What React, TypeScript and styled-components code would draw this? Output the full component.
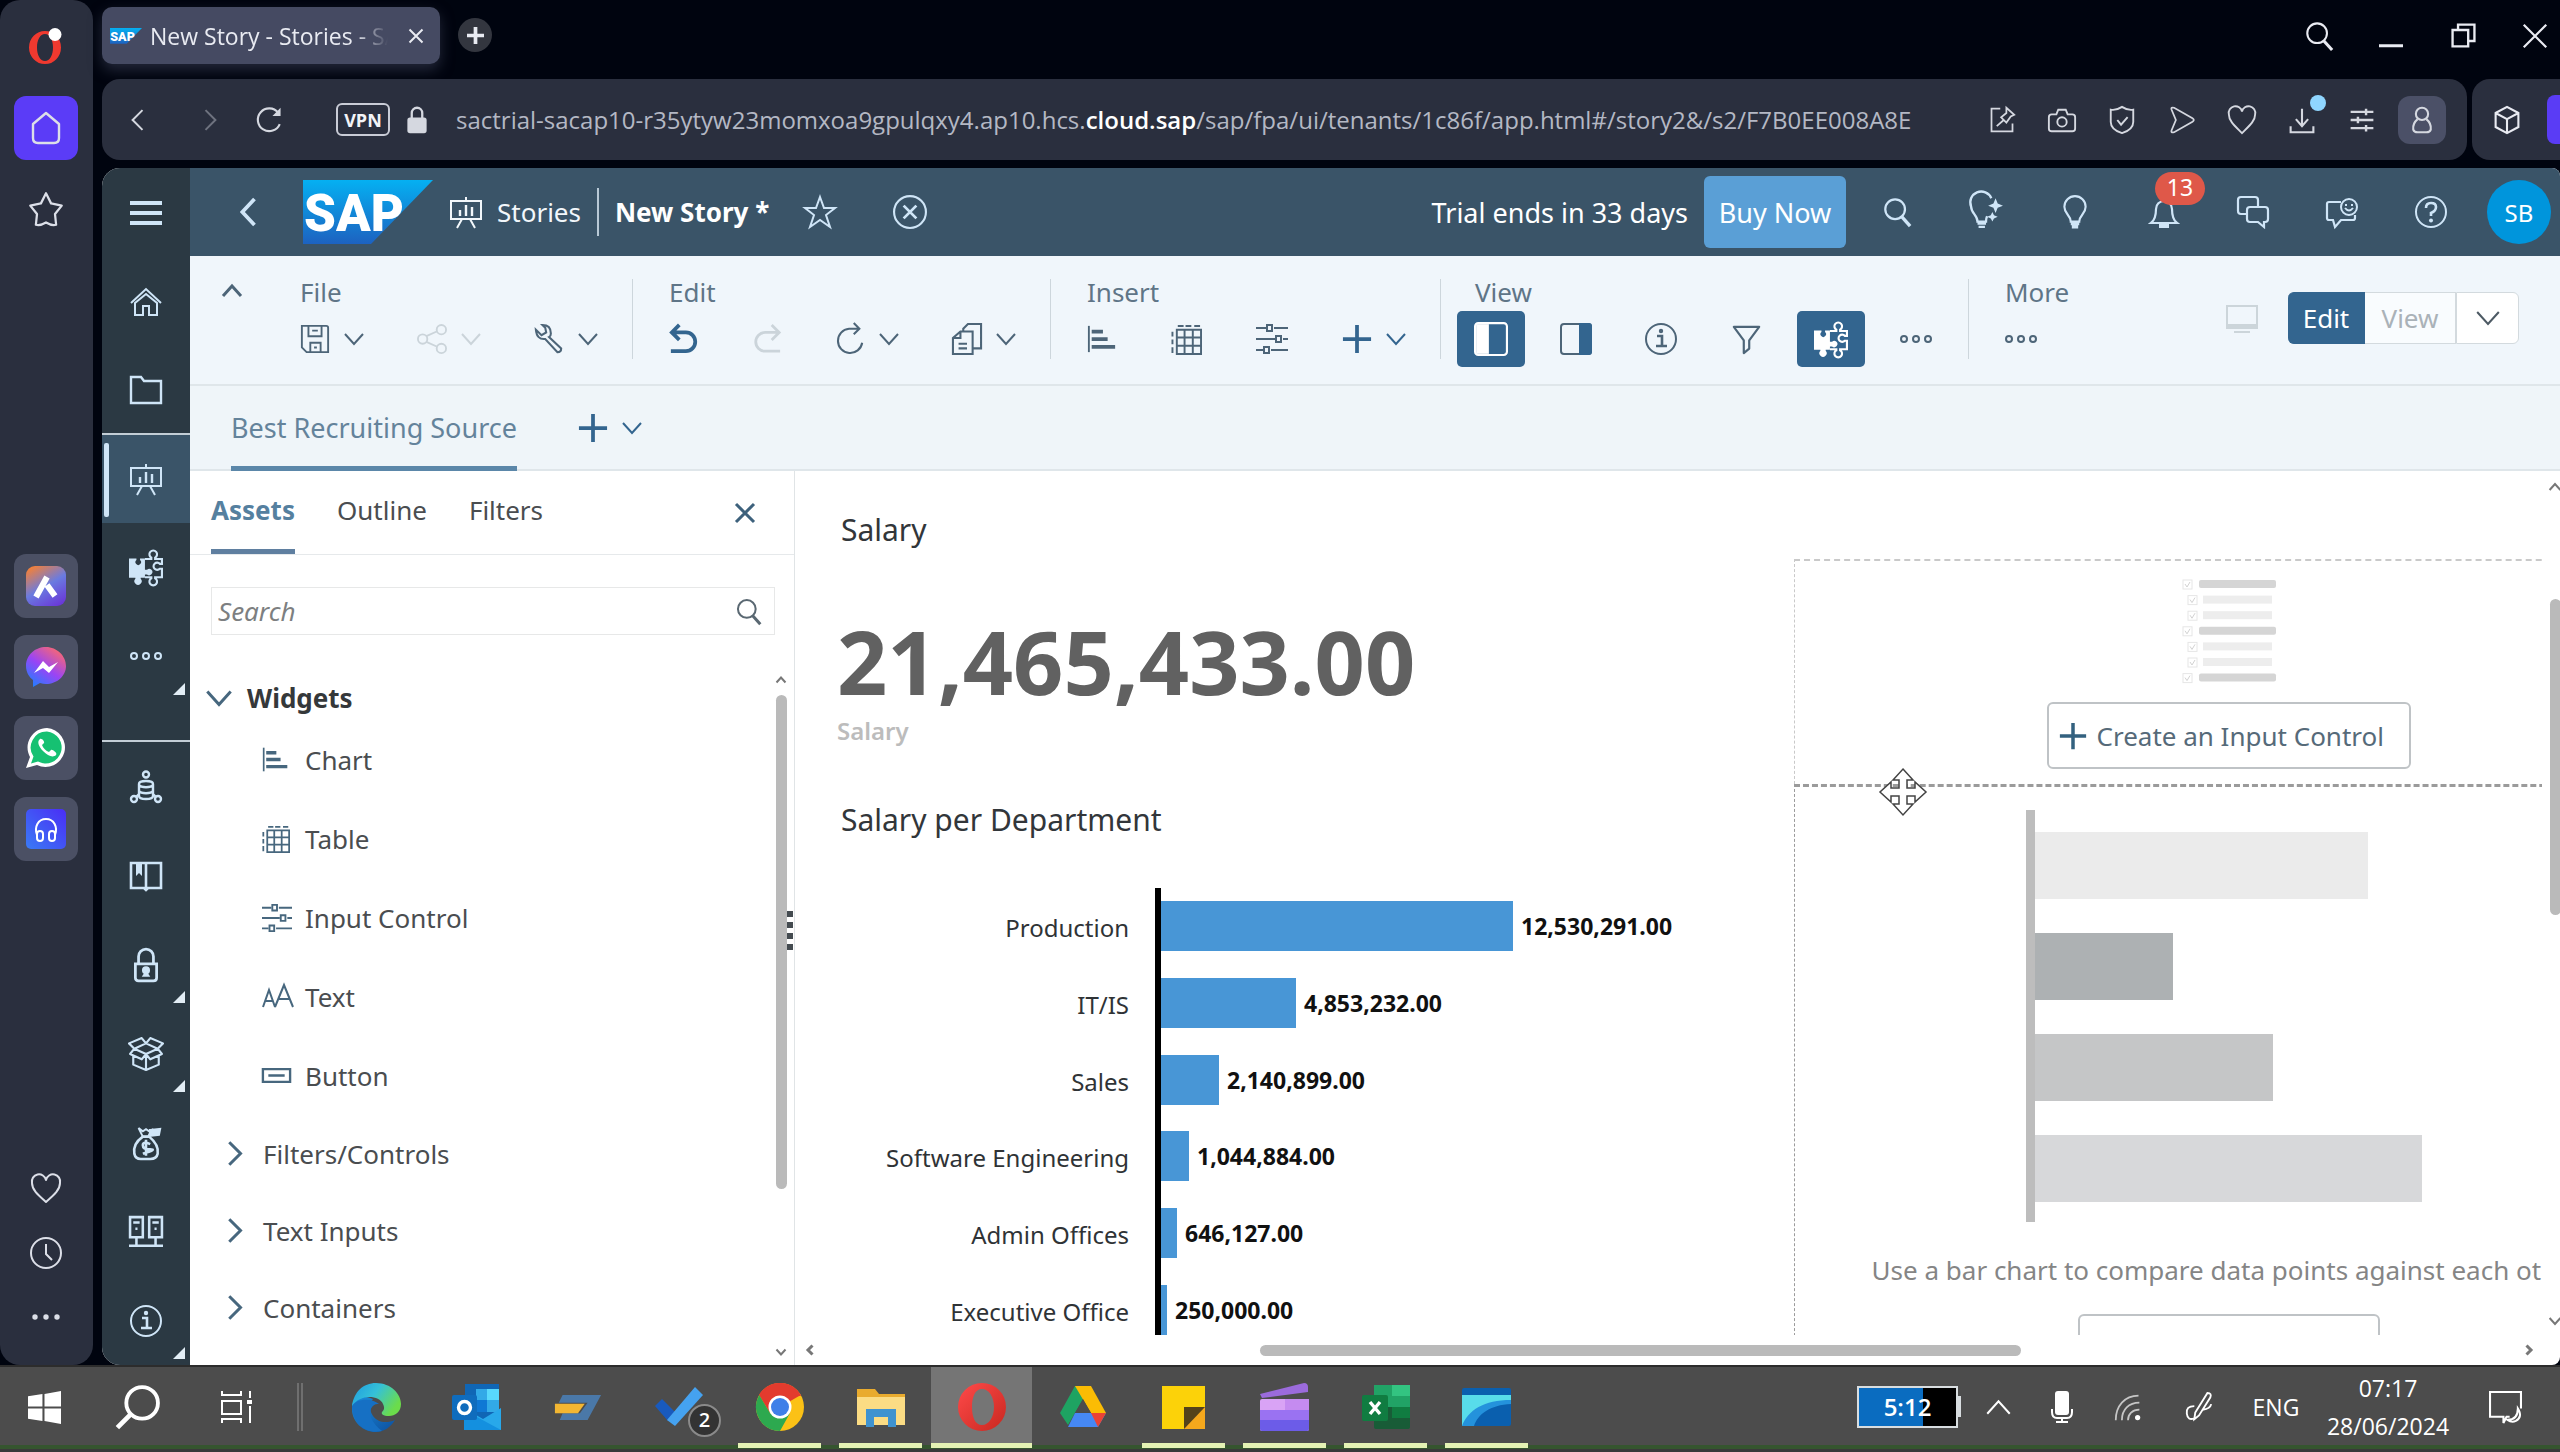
import React from 'react';
import styled, { createGlobalStyle, css } from 'styled-components';

const uiFont = '"Noto Sans", "Open Sans", sans-serif';
const chromeFont = '"Open Sans", "Noto Sans", sans-serif';

const color = {
  ink: '#00040f',
  chrome: '#2a2f3e',
  tile: '#4b5064',
  nav: '#2b3943',
  shell: '#3a5468',
  shellIcon: '#cfe5f7',
  tool: '#f0f6fb',
  toolIcon: '#4d6578',
  accent: '#33658f',
  line: '#dfe6ea',
  taskbar: '#4c4c4c',
};

const Global = createGlobalStyle`
  * { box-sizing: border-box; }
  body { margin: 0; background: ${color.ink}; font-family: ${uiFont}; }
  button { font: inherit; color: inherit; background: none; border: 0; padding: 0; margin: 0; }
  a { color: inherit; text-decoration: none; }
  svg { display: block; flex: none; overflow: visible; }
  h2, p { margin: 0; font-weight: 400; }
`;

/* ---------- icons ---------- */

type IconProps = { size?: number; w?: number; stroke?: number; children: React.ReactNode };
const Icon = ({ size = 32, w, stroke = 2, children }: IconProps) => (
  <svg width={w ?? size} height={size} viewBox={`0 0 ${w ?? 32} 32`} fill="none" stroke="currentColor" strokeWidth={stroke} aria-hidden="true">
    {children}
  </svg>
);

const Chevron = ({ dir = 'down', size = 20, stroke = 2 }: { dir?: 'down' | 'up' | 'left' | 'right'; size?: number; stroke?: number }) => {
  const d = { down: 'M1 5l9 10 9-10', up: 'M1 15l9-10 9 10', left: 'M15 1L6 10l9 9', right: 'M5 1l9 9-9 9' }[dir];
  return (
    <svg width={size} height={size} viewBox="0 0 20 20" fill="none" stroke="currentColor" strokeWidth={(stroke * 20) / size} aria-hidden="true">
      <path d={d} />
    </svg>
  );
};

const SearchGlyph = ({ size = 32, stroke = 2 }: { size?: number; stroke?: number }) => (
  <Icon size={size} stroke={stroke}><circle cx="14" cy="13" r="10.5" /><path d="M21 21l9 10" strokeWidth={stroke * 1.5} /></Icon>
);
const Dots = () => <Icon><circle cx="4" cy="16" r="3" /><circle cx="16" cy="16" r="3" /><circle cx="28" cy="16" r="3" /></Icon>;
const StoryGlyph = () => (
  <Icon><path d="M1 5h30v18H1zM16 1v4M12 23l-5 9M20 23l5 9" /><path d="M10 20v-6M16 20V9M22 20v-9" strokeWidth="2.4" /></Icon>
);
const Puzzle = () => (
  <Icon size={34}>
    <path d="M0 8h7v1.500a2.600 2.600 0 1 0 3.400 0V8H15v10.500h2a3 3 0 1 1 0 4.500h-2v3h-4v1a3.400 3.400 0 1 1-5 0v-1H0z" fill="currentColor" stroke="none" />
    <path d="M15 8.500h6V7.200a3.600 3.600 0 1 1 3.600 0v1.300H31V13h-2a3.400 3.400 0 1 0 0 4.600h2v8h-6.400v1a3.600 3.600 0 1 1-3.600 0v-1h-6" />
  </Icon>
);
const InfoGlyph = () => (
  <Icon><circle cx="16" cy="16" r="15" /><path d="M12 13h5v10M11 23h11" strokeWidth="2.600" /><circle cx="16" cy="8" r="2.200" fill="currentColor" stroke="none" /></Icon>
);
const ChartGlyph = ({ size = 30 }: { size?: number }) => (
  <Icon size={size}><path d="M2 2v28" /><path d="M5 8h12M5 16h17M5 24.500h25" strokeWidth="4" /></Icon>
);
const TableGlyph = ({ size = 32 }: { size?: number }) => (
  <Icon size={size}><path d="M6 6h25v25H6zM14 6v25M22.500 6v25M6 14h25M6 22.500h25" /><path d="M7 2h6M15 2h6M24 2h6M1.500 8v5M1.500 16v5M1.500 24v6" /></Icon>
);
const SlidersGlyph = ({ size = 32 }: { size?: number }) => (
  <Icon size={size}>
    <path d="M0 5h10M18 5h14M0 16h19M27 16h5M0 27h7M15 27h17" />
    <path d="M11 2h5v6h-5zM20 13h5v6h-5zM8 24h5v6H8z" />
  </Icon>
);
const Plus = ({ size = 30 }: { size?: number }) => <Icon size={size} stroke={4}><path d="M16 1v30M1 16h30" /></Icon>;
const Bulb = () => <Icon size={34}><path d="M12 25c0-6-6-7-6-14a10 10 0 0 1 20 0c0 7-6 8-6 14z" /><path d="M12 27h8M13 30h6" strokeWidth="3" /></Icon>;
const Heart = () => <Icon><path d="M16 29C8 22 2 17 2 10a7 7 0 0 1 14-3 7 7 0 0 1 14 3c0 7-6 12-14 19z" strokeLinejoin="round" /></Icon>;

/* ---------- frame ---------- */

const Screen = styled.div`
  height: 100vh;
  min-height: 1200px;
  display: flex;
  flex-direction: column;
  overflow: hidden;
`;
const Desktop = styled.div`
  flex: 1;
  min-height: 0;
  display: flex;
  gap: 9px;
`;
const Rail = styled.aside`
  width: 93px;
  flex: none;
  background: ${color.chrome};
  border-radius: 20px;
  display: flex;
  flex-direction: column;
  align-items: center;
  padding: 24px 2px 16px 0;
  color: #dcdfe8;
`;
const RailGroup = styled.div<{ $gap: number; $top?: string }>`
  display: flex;
  flex-direction: column;
  gap: ${p => p.$gap}px;
  margin-top: ${p => p.$top ?? '0'};
`;
const RailButton = styled.button<{ $bg?: string }>`
  width: 64px;
  height: 64px;
  border-radius: 12px;
  display: grid;
  place-items: center;
  background: ${p => p.$bg ?? 'transparent'};
`;
const RailLogo = styled.a`
  height: 44px;
  width: 64px;
  margin-bottom: 28px;
  display: grid;
  place-items: center;
`;
const BrowserColumn = styled.div`
  flex: 1;
  min-width: 0;
  display: flex;
  flex-direction: column;
  font-family: ${chromeFont};
`;
const TitleBar = styled.div`
  height: 79px;
  flex: none;
  display: flex;
  align-items: flex-start;
  padding: 7px 1px 0 0;
  color: #e9ebf2;
`;
const Tab = styled.div`
  width: 338px;
  height: 57px;
  border-radius: 10px;
  background: #454a62;
  box-shadow: 0 6px 14px #23283a;
  display: flex;
  align-items: center;
  gap: 8px;
  padding: 0 16px 0 8px;
  font-size: 23px;
`;
const TabTitle = styled.span`
  flex: 1;
  min-width: 0;
  margin-right: 12px;
  overflow: hidden;
  white-space: nowrap;
  mask-image: linear-gradient(90deg, #000 86%, transparent);
`;
const NewTab = styled.button`
  width: 34px;
  height: 34px;
  border-radius: 50%;
  background: #33363f;
  margin: 11px 0 0 18px;
  display: grid;
  place-items: center;
`;
const WindowButtons = styled.div`
  margin-left: auto;
  display: flex;
  gap: 24px;
`;
const WindowButton = styled.button`
  width: 48px;
  height: 57px;
  display: grid;
  place-items: center;
`;
const AddressRow = styled.div`
  height: 81px;
  flex: none;
  display: flex;
  gap: 5px;
  margin-bottom: 8px;
`;
const AddressBar = styled.div`
  flex: 1;
  min-width: 0;
  background: ${color.chrome};
  border-radius: 18px;
  display: flex;
  align-items: center;
  padding-right: 15px;
  color: #d5d8e0;
`;
const ChromeButton = styled.button<{ $w?: number; $dim?: boolean }>`
  width: ${p => p.$w ?? 60}px;
  height: 60px;
  flex: none;
  display: grid;
  place-items: center;
  position: relative;
  opacity: ${p => (p.$dim ? 0.4 : 1)};
`;
const Vpn = styled.button`
  margin-left: 46px;
  width: 54px;
  height: 33px;
  border: 2px solid #c9ccd6;
  border-radius: 6px;
  font-size: 18px;
  line-height: 28px;
  font-weight: 700;
  color: #f2f3f7;
`;
const Url = styled.div`
  flex: 1;
  min-width: 0;
  margin: 0 29px 0 12px;
  overflow: hidden;
  white-space: nowrap;
  font-size: 24px;
  line-height: 40px;
  color: #b4b8c4;
  b { color: #fff; font-weight: 600; }
`;
const DownloadDot = styled.i`
  position: absolute;
  width: 16px;
  height: 16px;
  border-radius: 50%;
  background: #8fd6ff;
  right: 6px;
  top: 5px;
`;
const Profile = styled.span`
  width: 48px;
  height: 48px;
  border-radius: 12px;
  background: #4b5067;
  display: grid;
  place-items: center;
`;
const SideDock = styled.div`
  width: 88px;
  flex: none;
  background: ${color.chrome};
  border-radius: 18px 0 0 18px;
  display: flex;
  align-items: center;
  justify-content: space-between;
  padding-left: 5px;
  color: #e9ebf2;
`;
const DockAccent = styled.i`
  width: 13px;
  height: 49px;
  border-radius: 8px 0 0 8px;
  background: #5a3cf5;
`;

/* ---------- application shell ---------- */

const AppWindow = styled.div`
  flex: 1;
  min-height: 0;
  display: flex;
  border-radius: 18px 8px 8px 18px;
  overflow: hidden;
  background: #fff;
  font-family: ${uiFont};
`;
const Nav = styled.nav`
  width: 88px;
  flex: none;
  background: ${color.nav};
  color: ${color.shellIcon};
  display: flex;
  flex-direction: column;
`;
const NavItem = styled.button<{ $h?: number; $active?: boolean; $more?: boolean }>`
  position: relative;
  height: ${p => p.$h ?? 88}px;
  flex: none;
  display: grid;
  place-items: center;
  ${p => p.$active && css`
    background: ${color.shell};
    border-top: 2px solid #c3ced6;
    &::before {
      content: '';
      position: absolute;
      left: 2px;
      top: 8px;
      bottom: 6px;
      width: 5px;
      border-radius: 2px;
      background: ${color.shellIcon};
    }
  `}
  ${p => p.$more && css`
    &::after {
      content: '';
      position: absolute;
      right: 5px;
      bottom: 6px;
      border-left: 12px solid transparent;
      border-bottom: 12px solid #e2edf5;
    }
  `}
`;
const NavLower = styled.div`
  margin-top: 39px;
  border-top: 2px solid #c3ced6;
  flex: 1;
  display: flex;
  flex-direction: column;
  ${NavItem} { flex: 1; height: auto; }
`;
const Work = styled.div`
  flex: 1;
  min-width: 0;
  display: flex;
  flex-direction: column;
`;
const Shell = styled.header`
  height: 88px;
  flex: none;
  background: ${color.shell};
  color: #fff;
  display: flex;
  align-items: center;
  font-size: 27px;
`;
const ShellButton = styled.button<{ $w?: number }>`
  position: relative;
  width: ${p => p.$w ?? 89}px;
  height: 88px;
  flex: none;
  display: grid;
  place-items: center;
  color: ${color.shellIcon};
`;
const Crumb = styled.a`
  display: flex;
  align-items: center;
  gap: 15px;
  margin-left: 17px;
  font-size: 26px;
  color: #f2f7fb;
`;
const CrumbRule = styled.i`
  width: 2px;
  height: 48px;
  background: #b8c9d6;
  margin: 0 16px;
`;
const StoryName = styled.span`
  font-size: 26px;
  font-weight: 700;
`;
const Trial = styled.span`
  margin-left: auto;
  margin-right: 16px;
`;
const Buy = styled.button`
  width: 142px;
  height: 72px;
  border-radius: 6px;
  background: #5a9fd6;
  margin-right: 6px;
`;
const Badge = styled.span`
  position: absolute;
  top: 4px;
  left: 36px;
  width: 50px;
  height: 33px;
  border-radius: 17px;
  background: #df5849;
  color: #fff;
  font-size: 23px;
  line-height: 30px;
  text-align: center;
`;
const Avatar = styled.button`
  width: 64px;
  height: 64px;
  border-radius: 50%;
  background: #0095dc;
  margin: 0 9px 0 12px;
  font-size: 24px;
`;

const Toolbar = styled.div`
  height: 130px;
  flex: none;
  background: ${color.tool};
  border-bottom: 2px solid ${color.line};
  padding: 19px 41px 0 0;
  display: flex;
  align-items: flex-start;
  color: ${color.toolIcon};
`;
const Collapse = styled.button`
  width: 84px;
  height: 32px;
  margin-right: 26px;
  display: grid;
  place-items: center;
`;
const Group = styled.section<{ $tight?: boolean }>`
  h2 {
    font-size: 26px;
    line-height: 34px;
    color: #5f7587;
    padding-left: ${p => (p.$tight ? 18 : 0)}px;
  }
`;
const Tools = styled.div<{ $gap?: number }>`
  height: 56px;
  margin-top: 2px;
  display: flex;
  align-items: center;
  gap: ${p => p.$gap ?? 53}px;
`;
const Tool = styled.button<{ $dim?: boolean; $strong?: boolean }>`
  min-width: 30px;
  height: 56px;
  display: flex;
  align-items: center;
  gap: 14px;
  color: ${p => (p.$dim ? '#cbd4da' : p.$strong ? color.accent : 'inherit')};
`;
const Toggle = styled.button<{ $on?: boolean }>`
  width: 68px;
  height: 56px;
  border-radius: 5px;
  display: grid;
  place-items: center;
  background: ${p => (p.$on ? color.accent : 'transparent')};
  color: ${p => (p.$on ? '#fff' : 'inherit')};
`;
const Separator = styled.i<{ $l?: number; $r?: number }>`
  width: 1px;
  height: 80px;
  margin: 4px ${p => p.$r ?? 36}px 0 ${p => p.$l ?? 34}px;
  background: #cdd6dc;
`;
const Modes = styled.div`
  margin: 17px 0 0 auto;
  display: flex;
  align-items: center;
  font-size: 26px;
`;
const Mode = styled.button<{ $w: number; $on?: boolean }>`
  width: ${p => p.$w}px;
  height: 52px;
  display: grid;
  place-items: center;
  background: ${p => (p.$on ? color.accent : '#f9fcfe')};
  color: ${p => (p.$on ? '#fff' : '#aab2b8')};
  border: 1px solid ${p => (p.$on ? color.accent : '#d3dade')};
  border-left-width: 0;
  &:first-of-type { border-radius: 6px 0 0 6px; }
  &:last-of-type { border-left-width: 1px; border-radius: 0 6px 6px 0; background: #fff; color: #4d5a64; }
`;
const Device = styled.span`
  color: #ccd5da;
  margin-right: 30px;
`;
const PageTabs = styled.div`
  height: 85px;
  flex: none;
  background: #eff5f9;
  border-bottom: 2px solid ${color.line};
  padding-left: 41px;
  display: flex;
  align-items: flex-start;
  color: ${color.toolIcon};
`;
const PageTab = styled.button`
  font-size: 27px;
  color: #64839b;
  border-bottom: 5px solid #5b87a9;
  height: 85px;
  padding-top: 3px;
  margin-right: 61px;
`;
const AddPage = styled(Tool)`
  height: 84px;
`;

/* ---------- assets panel ---------- */

const Body = styled.div`
  flex: 1;
  min-height: 0;
  display: flex;
`;
const Panel = styled.aside`
  position: relative;
  width: 605px;
  flex: none;
  border-right: 1px solid #e0e4e6;
  display: flex;
  flex-direction: column;
  color: #4a4d50;
  font-size: 26px;
`;
const PanelTabs = styled.div`
  height: 84px;
  flex: none;
  border-bottom: 1px solid #e6e9eb;
  padding: 0 33px 0 21px;
  display: flex;
  gap: 42px;
`;
const PanelTab = styled.button<{ $on?: boolean }>`
  height: 83px;
  font-weight: ${p => (p.$on ? 700 : 400)};
  color: ${p => (p.$on ? '#55809f' : 'inherit')};
  border-bottom: 5px solid ${p => (p.$on ? '#5f7fa0' : 'transparent')};
`;
const ClosePanel = styled.button`
  margin-left: auto;
  color: #3d617c;
`;
const SearchBox = styled.label`
  margin: 32px 19px 40px 21px;
  height: 48px;
  flex: none;
  border: 1px solid #e7e8e8;
  padding: 0 12px 0 6px;
  display: flex;
  align-items: center;
  color: #5a6872;
  input {
    flex: 1;
    min-width: 0;
    border: 0;
    outline: 0;
    padding: 0;
    background: none;
    font: italic 26px ${uiFont};
  }
  input::placeholder { color: #7d7f81; opacity: 1; }
`;
const TreeArea = styled.div`
  flex: 1;
  min-height: 0;
  display: flex;
  justify-content: space-between;
`;
const Tree = styled.ul`
  list-style: none;
  margin: 0;
  padding: 0;
  flex: 1;
  overflow: hidden;
`;
const TreeRow = styled.li<{ $h: number; $indent: number; $gap: number; $bold?: boolean }>`
  height: ${p => p.$h}px;
  padding-left: ${p => p.$indent}px;
  display: flex;
  align-items: center;
  gap: ${p => p.$gap}px;
  font-weight: ${p => (p.$bold ? 700 : 400)};
  color: ${p => (p.$bold ? '#35383a' : 'inherit')};
  svg { color: #47677e; }
`;
const WidgetIcon = styled.span`
  width: 43px;
  flex: none;
`;
const ScrollColumn = styled.div<{ $w: number; $pad: string }>`
  width: ${p => p.$w}px;
  flex: none;
  display: flex;
  flex-direction: column;
  align-items: center;
  padding: ${p => p.$pad};
  color: #777;
`;
const VThumb = styled.i<{ $h: number; $top: number }>`
  width: 11px;
  height: ${p => p.$h}px;
  margin: ${p => p.$top}px 0 auto;
  border-radius: 6px;
  background: #bababa;
`;
const Grip = styled.i`
  position: absolute;
  right: 1px;
  top: 440px;
  width: 6px;
  height: 40px;
  background: repeating-linear-gradient(#444b50 0 6px, transparent 6px 11px);
`;

/* ---------- story canvas ---------- */

const CanvasArea = styled.main`
  flex: 1;
  min-width: 0;
  display: flex;
  flex-direction: column;
`;
const CanvasRow = styled.div`
  flex: 1;
  min-height: 0;
  display: flex;
`;
const Canvas = styled.div`
  position: relative;
  flex: 1;
  min-width: 0;
  overflow: hidden;
  display: grid;
  grid-template-columns: 999px 868px;
`;
const Stats = styled.div`
  padding: 38px 0 0 46px;
  color: #32363a;
`;
const WidgetTitle = styled.h2`
  font-size: 30px;
  line-height: 42px;
`;
const BigNumber = styled.p`
  margin-top: 57px;
  margin-left: -4px;
  font-size: 88px;
  line-height: 106px;
  font-weight: 700;
  color: #616161;
`;
const NumberCaption = styled.p`
  margin: 0 0 51px -4px;
  font-size: 24px;
  line-height: 34px;
  font-weight: 600;
  color: #bcbcbc;
`;
const Bars = styled.div`
  height: 460px;
  margin-top: 47px;
  display: flex;
  flex-direction: column;
`;
const BarRow = styled.div`
  flex: 1;
  display: grid;
  grid-template-columns: 288px 1fr;
  column-gap: 26px;
`;
const BarLabel = styled.span`
  align-self: center;
  text-align: right;
  font-size: 24px;
  line-height: 32px;
  padding-top: 4px;
  color: #2f3336;
`;
const BarTrack = styled.div`
  border-left: 6px solid #000;
  display: flex;
  align-items: center;
  gap: 8px;
  font-size: 23px;
  font-weight: 700;
  color: #111;
`;
const Bar = styled.i`
  height: 50px;
  background: #4896d6;
`;
const Placeholders = styled.div`
  padding-top: 88px;
  display: flex;
  flex-direction: column;
`;
const InputPlaceholder = styled.section`
  height: 225px;
  border: dashed #c9c9c9;
  border-width: 2px 0 0 1px;
  padding-top: 18px;
  display: flex;
  flex-direction: column;
  align-items: center;
  gap: 19px;
`;
const ChartPlaceholder = styled.section`
  flex: 1;
  border: dashed #9b9b9b;
  border-width: 3px 0 0 1px;
  display: flex;
  flex-direction: column;
  align-items: center;
  padding-top: 23px;
`;
const OutlineButton = styled.button<{ $w: number }>`
  width: ${p => p.$w}px;
  height: 67px;
  flex: none;
  border: 2px solid #bfc3c6;
  border-radius: 6px;
  display: flex;
  align-items: center;
  gap: 10px;
  padding: 0 10px;
  font-size: 26px;
  color: #566a79;
  svg { color: #33617f; }
`;
const GhostBars = styled.div`
  width: 406px;
  height: 412px;
  flex: none;
  border-left: 9px solid #bdbdbd;
  padding: 22px 0;
  display: flex;
  flex-direction: column;
  gap: 34px;
`;
const GhostBar = styled.i<{ $c: string }>`
  height: 67px;
  flex: none;
  background: ${p => p.$c};
`;
const Hint = styled.p`
  font-size: 26px;
  line-height: 40px;
  color: #858585;
  margin: 28px 0 24px;
`;
const MoveCursor = styled.svg`
  position: absolute;
  left: 1084px;
  top: 297px;
`;
const HScroll = styled.div`
  height: 30px;
  flex: none;
  display: flex;
  align-items: center;
  padding: 0 26px 0 10px;
  color: #777;
`;
const HThumb = styled.i`
  width: 761px;
  height: 11px;
  border-radius: 6px;
  background: #bababa;
  margin: 0 auto 0 445px;
`;

/* ---------- task bar ---------- */

const TaskBar = styled.footer`
  height: 87px;
  flex: none;
  background: linear-gradient(${color.taskbar} 78px, #35552f 78px 82px, #393939 82px);
  border-top: 2px solid #2c2c2c;
  display: flex;
  color: #fff;
  font-family: ${chromeFont};
`;
const TaskButton = styled.button<{ $w?: number; $open?: boolean; $active?: boolean }>`
  position: relative;
  width: ${p => p.$w ?? 101}px;
  height: 80px;
  flex: none;
  display: grid;
  place-items: center;
  ${p => p.$active && css`height: 77px; background: #757575; padding-top: 3px;`}
  ${p => p.$open && css`
    &::after {
      content: '';
      position: absolute;
      left: ${p.$active ? 0 : 9}px;
      right: ${p.$active ? 0 : 9}px;
      top: 76px;
      height: 5px;
      background: #e4f2b4;
    }
  `}
`;
const TaskRule = styled.i`
  width: 6px;
  height: 48px;
  margin: 16px 22px 0 11px;
  border: solid #6f6f6f;
  border-width: 0 2px;
`;
const Count = styled.span`
  position: absolute;
  left: 60px;
  top: 37px;
  width: 33px;
  height: 33px;
  border: 2px solid #8a8a8a;
  border-radius: 50%;
  background: #333;
  font-size: 20px;
  line-height: 28px;
  font-weight: 600;
`;
const Tray = styled.div`
  margin-left: auto;
  padding-right: 10px;
  display: flex;
`;
const Battery = styled.div`
  position: relative;
  width: 101px;
  height: 42px;
  margin: 19px 8px 0 0;
  border: 2px solid #d8dde0;
  background: linear-gradient(90deg, #0a6cc0 66%, #000 66%);
  font-size: 24px;
  line-height: 38px;
  font-weight: 600;
  text-align: center;
  &::after {
    content: '';
    position: absolute;
    right: -5px;
    top: 8px;
    width: 4px;
    height: 21px;
    background: #d8dde0;
  }
`;
const Clock = styled.time`
  width: 144px;
  text-align: center;
  font-size: 23px;
  line-height: 38px;
  padding-top: 2px;
`;
const Lang = styled.span`
  width: 80px;
  text-align: center;
  font-size: 23px;
  line-height: 80px;
`;

/* ---------- data ---------- */

const departments = [
  { name: 'Production', value: '12,530,291.00', width: 352 },
  { name: 'IT/IS', value: '4,853,232.00', width: 135 },
  { name: 'Sales', value: '2,140,899.00', width: 58 },
  { name: 'Software Engineering', value: '1,044,884.00', width: 28 },
  { name: 'Admin Offices', value: '646,127.00', width: 16 },
  { name: 'Executive Office', value: '250,000.00', width: 6 },
];
const ghosts = [
  { width: 333, tone: '#ebebeb' },
  { width: 138, tone: '#adb1b3' },
  { width: 238, tone: '#c5c6c7' },
  { width: 387, tone: '#d7d8da' },
];
const widgets = [
  { label: 'Chart', icon: <ChartGlyph size={27} /> },
  { label: 'Table', icon: <TableGlyph size={28} /> },
  { label: 'Input Control', icon: <SlidersGlyph size={30} /> },
  { label: 'Text', icon: <Icon size={32}><path d="M1 26L7 9l6 17M3 20h8M13 26L22 4l9 22M16 18h12" /></Icon> },
  { label: 'Button', icon: <Icon size={29}><path d="M1 9h30v14H1zM7 16h18" strokeWidth="2.600" /></Icon> },
];
const sections = ['Filters/Controls', 'Text Inputs', 'Containers'];

/* ---------- brand drawings ---------- */

const OperaRing = ({ w, h, id }: { w: number; h: number; id: string }) => (
  <svg width={w} height={h} viewBox="0 0 48 48" aria-hidden="true">
    <defs><linearGradient id={id} x1="0" y1="0" x2="1" y2="1"><stop offset="0" stopColor="#ff4a4a" /><stop offset="1" stopColor="#c8281f" /></linearGradient></defs>
    <path fillRule="evenodd" fill={`url(#${id})`} d="M24 0a24 24 0 1 0 0 48 24 24 0 0 0 0-48zm0 6c7 0 12 8 12 18s-5 18-12 18-10-8-10-18S17 6 24 6z" />
  </svg>
);

const SapLogo = ({ w, id }: { w: number; id: string }) => (
  <svg width={w} viewBox="0 0 130 64" role="img" aria-label="SAP">
    <defs><linearGradient id={id} x1="0" y1="0" x2="0" y2="1"><stop offset="0" stopColor="#05b0f2" /><stop offset="1" stopColor="#1d62c0" /></linearGradient></defs>
    <path d="M0 0h130L68 64H0z" fill={`url(#${id})`} />
    <text x="1" y="51" fill="#fff" fontFamily="Roboto, sans-serif" fontWeight="900" fontSize="51">SAP</text>
  </svg>
);

const Check = ({ x, y }: { x: number; y: number }) => (
  <g fill="none" stroke="#d2d2d2"><rect x={x} y={y} width="9" height="9" stroke="#e6e6e6" /><path d={`M${x + 2} ${y + 4}l2 3 3-5`} /></g>
);
const ListDrawing = () => (
  <svg width="94" height="104" viewBox="0 0 94 104" aria-hidden="true">
    {[0, 1, 2, 3, 4, 5, 6].map(i => {
      const head = i % 3 === 0;
      const y = 1 + i * 15.6;
      return (
        <g key={i}>
          <Check x={head ? 1 : 6} y={y} />
          <rect x={head ? 17 : 21} y={y} width={head ? 77 : 69} height="8" rx={head ? 2 : 0} fill={head ? '#d5d5d5' : '#ededed'} />
        </g>
      );
    })}
  </svg>
);

const Edge = () => (
  <svg width="50" height="50" viewBox="0 0 50 50" aria-hidden="true">
    <defs>
      <linearGradient id="edgeTop" x1="0" y1="0" x2="1" y2=".5"><stop offset="0" stopColor="#1e9be0" /><stop offset=".5" stopColor="#35c1d8" /><stop offset="1" stopColor="#6bdc4b" /></linearGradient>
      <linearGradient id="edgeBody" x1="0" y1="0" x2="1" y2="1"><stop offset="0" stopColor="#1b8fdd" /><stop offset="1" stopColor="#0d4f9e" /></linearGradient>
    </defs>
    <path fill="url(#edgeBody)" d="M1 27C1 12 12 13 22 17c-4 4-4 11 0 17s13 8 22 4c-4 7-11 12-19 12C12 50 1 40 1 27z" />
    <path fill="#1670c4" d="M1 24c4-8 20-8 27-2-7-1-10 6-8 13 2 6 6 10 11 14C16 53 1 42 1 24z" />
    <path fill="url(#edgeTop)" d="M1 24C3 10 12 1 25 1c15 0 25 11 25 21 0 8-6 12-12 12s-8-2-7-4c2-2 3-4 1-8C28 13 9 12 1 24z" />
  </svg>
);
const Outlook = () => (
  <svg width="50" height="46" viewBox="0 0 50 46" aria-hidden="true">
    <rect x="13" y="0" width="34" height="40" fill="#1066b5" /><rect x="24" y="5" width="11" height="11" fill="#32a9e7" /><rect x="35" y="5" width="12" height="11" fill="#58d9fd" />
    <rect x="24" y="16" width="11" height="12" fill="#0f78d4" /><rect x="35" y="16" width="12" height="12" fill="#32a9e7" />
    <path d="M12 24l19 11 18-11v22H12z" fill="#28a8ea" /><path d="M12 26l37 20H12z" fill="#1490df" />
    <rect x="0" y="11" width="25" height="25" rx="2" fill="#0f6cbd" /><circle cx="12.500" cy="23.500" r="6" fill="none" stroke="#fff" strokeWidth="3.400" />
  </svg>
);
const Slant = () => (
  <svg width="48" height="25" viewBox="0 0 48 26" aria-hidden="true">
    <path d="M8 0h40L34 26H5l3-7h18l8-11H4z" fill="#4a78a8" /><path d="M0 9h31l-7 10H0z" fill="#f2b632" />
  </svg>
);
const Todo = () => (
  <svg width="48" height="40" viewBox="0 0 48 40" aria-hidden="true">
    <path d="M0 19l7-7 14 14-8 8z" fill="#195abd" /><path d="M12 33L40 0l8 8-28 31z" fill="#45a2f0" />
  </svg>
);
const Chrome = () => (
  <svg width="48" height="48" viewBox="0 0 48 48" aria-hidden="true">
    <circle cx="24" cy="24" r="24" fill="#fbc116" />
    <path d="M24 24L3.200 12A24 24 0 0 1 44.800 12z" fill="#e33b2e" /><path d="M24 13h21a24 24 0 0 0-42-1l11 18z" fill="#e33b2e" />
    <path d="M3.200 12A24 24 0 0 0 24 48l10-18-10 5-10-5z" fill="#2da94f" />
    <circle cx="24" cy="24" r="11.500" fill="#fff" /><circle cx="24" cy="24" r="9" fill="#3f7fe8" />
  </svg>
);
const Explorer = () => (
  <svg width="48" height="40" viewBox="0 0 48 40" aria-hidden="true">
    <path d="M0 2h18l4 5h26v31H0z" fill="#e9ab2e" /><path d="M0 10h48v28H0z" fill="#fbdc84" />
    <path d="M9 40V22h30v18h-8V30H17v10z" fill="#3f93d0" />
  </svg>
);
const Drive = () => (
  <svg width="46" height="42" viewBox="0 0 46 42" aria-hidden="true">
    <path d="M15 0h16l-8 13L8 39l-8-12z" fill="#1ea362" /><path d="M15 0h16l15 27H31z" fill="#fbbc04" /><path d="M15 27h31l-8 14H8z" fill="#4688f4" /><path d="M31 27h15l-8 14z" fill="#ea4335" />
    <path d="M23 13l8 14H15z" fill="#4c4c4c" />
  </svg>
);
const Sticky = () => (
  <svg width="43" height="43" viewBox="0 0 43 43" aria-hidden="true">
    <path d="M0 0h43v43H0z" fill="#fcd209" /><path d="M22 21h21v22H22z" fill="#54421a" /><path d="M22 43l21-22v22z" fill="#f5a81c" />
  </svg>
);
const Clip = () => (
  <svg width="49" height="48" viewBox="0 0 49 48" aria-hidden="true">
    <path d="M0 11L44 0c3 0 4 2 4 4v5L2 15z" fill="#9b6bdc" /><rect y="16" width="49" height="32" rx="2" fill="#d9a3f5" />
    <path d="M25 16h24v11H25z" fill="#c58bf0" /><path d="M0 27h49v11H0z" fill="#9a72f2" /><path d="M0 37h49v9q0 2-2 2H2q-2 0-2-2z" fill="#6c5ce8" />
  </svg>
);
const Excel = () => (
  <svg width="48" height="44" viewBox="0 0 48 44" aria-hidden="true">
    <rect x="12" width="36" height="44" rx="2" fill="#185c37" /><path d="M12 0h18v22H12z" fill="#21a366" /><path d="M30 0h18v11H30z" fill="#33c481" /><path d="M30 11h18v11H30z" fill="#21a366" /><path d="M30 22h18v11H30z" fill="#107c41" />
    <rect y="10" width="26" height="26" rx="2" fill="#107c41" /><path d="M8 17l10 12M18 17L8 29" stroke="#fff" strokeWidth="3.400" />
  </svg>
);
const BlueApp = () => (
  <svg width="49" height="38" viewBox="0 0 49 38" aria-hidden="true">
    <rect width="49" height="38" rx="2" fill="#0a5fae" /><path d="M0 7h49v8C26 16 12 24 7 38H0z" fill="#58dcea" /><path d="M0 38C6 22 22 12 49 12v4C28 17 16 26 12 38z" fill="#2492dc" />
  </svg>
);

const apps: { name: string; art: React.ReactNode; open?: boolean; active?: boolean; count?: number }[] = [
  { name: 'Edge', art: <Edge /> },
  { name: 'Outlook', art: <Outlook /> },
  { name: 'Power Automate', art: <Slant /> },
  { name: 'To Do', art: <Todo />, count: 2 },
  { name: 'Chrome', art: <Chrome />, open: true },
  { name: 'File Explorer', art: <Explorer />, open: true },
  { name: 'Opera', art: <OperaRing w={48} h={48} id="operaTask" />, open: true, active: true },
  { name: 'Drive', art: <Drive /> },
  { name: 'Sticky Notes', art: <Sticky />, open: true },
  { name: 'Clipchamp', art: <Clip />, open: true },
  { name: 'Excel', art: <Excel />, open: true },
  { name: 'Whiteboard', art: <BlueApp />, open: true },
];

/* ---------- sections of the screen ---------- */

const OperaRail = () => (
  <Rail>
    <RailLogo href="#opera" aria-label="Opera menu">
      <svg width="36" height="36" viewBox="0 0 36 36" aria-hidden="true">
        <path fillRule="evenodd" fill="#f0392f" d="M17 3a16 16.500 0 1 0 0 33 16 16.500 0 0 0 0-33zm0 3c5 0 8 6 8 13.500S22 33 17 33 9 27 9 19.500 12 6 17 6z" />
        <circle cx="27" cy="6.500" r="6.500" fill="#fff" />
      </svg>
    </RailLogo>
    <RailGroup $gap={17}>
      <RailButton $bg="#5b3cf7" aria-label="Home">
        <Icon><path d="M16 1L3 12v14q0 5 5 5h16q5 0 5-5V12z" strokeLinejoin="round" strokeWidth="2.400" /></Icon>
      </RailButton>
      <RailButton aria-label="Pinboards">
        <Icon size={36}><path d="M16 2l4.500 9L30 13l-6 7.500L25 30q-4 1-9-2-5 3-9 2l1-9.500L2 13l9.500-2z" strokeLinejoin="round" /></Icon>
      </RailButton>
    </RailGroup>
    <RailGroup $gap={17} $top="313px">
      <RailButton $bg={color.tile} aria-label="Aria">
        <svg width="40" height="40" viewBox="0 0 40 40" aria-hidden="true">
          <defs><linearGradient id="aria" x1=".2" y1="0" x2=".8" y2="1"><stop offset="0" stopColor="#f0803c" /><stop offset=".5" stopColor="#6a7be0" /><stop offset="1" stopColor="#6a38d8" /></linearGradient></defs>
          <rect width="40" height="40" rx="9" fill="url(#aria)" /><path d="M10 31l11-20M21 19l8 11" stroke="#fff" strokeWidth="6" strokeLinecap="butt" />
        </svg>
      </RailButton>
      <RailButton $bg={color.tile} aria-label="Messenger">
        <svg width="40" height="40" viewBox="0 0 40 40" aria-hidden="true">
          <defs><linearGradient id="msgr" x1=".1" y1="1" x2=".8" y2="0"><stop offset="0" stopColor="#1684ff" /><stop offset=".5" stopColor="#9a44f5" /><stop offset="1" stopColor="#ff6a6a" /></linearGradient></defs>
          <path d="M20 0C9 0 0 8 0 19c0 6 3 11 7 14v7l7-4c2 .500 4 1 6 1 11 0 20-8 20-18S31 0 20 0z" fill="url(#msgr)" />
          <path d="M8 26l9-12 6 6 9-5-9 11-6-5z" fill="#fff" />
        </svg>
      </RailButton>
      <RailButton $bg={color.tile} aria-label="WhatsApp">
        <svg width="40" height="40" viewBox="0 0 40 40" aria-hidden="true">
          <path d="M21 0A19.500 19.500 0 0 0 4 29L0 40l11-3A19.500 19.500 0 1 0 21 0z" fill="#fff" />
          <path d="M21 3.500A16 16 0 0 0 7.500 28.500L5 35.500l7-2A16 16 0 1 0 21 3.500z" fill="#16c172" />
          <path d="M14 11c-3 2-2 7 3 12s10 7 13 4c2-2-4-6-5-5l-2 2c-3-1-6-4-7-7l2-2c1-1-2-5-4-4z" fill="#fff" />
        </svg>
      </RailButton>
      <RailButton $bg={color.tile} aria-label="Player">
        <svg width="40" height="40" viewBox="0 0 40 40" aria-hidden="true">
          <defs><linearGradient id="player" x1="0" y1="1" x2="1" y2="0"><stop offset="0" stopColor="#3a7bf5" /><stop offset="1" stopColor="#4a2df5" /></linearGradient></defs>
          <rect width="40" height="40" rx="5" fill="url(#player)" />
          <path d="M11 26c-3-8 1-16 9-16s12 8 9 16" fill="none" stroke="#fff" strokeWidth="2" /><rect x="11" y="22" width="6" height="10" rx="3" fill="none" stroke="#fff" strokeWidth="2" /><rect x="23" y="22" width="6" height="10" rx="3" fill="none" stroke="#fff" strokeWidth="2" />
        </svg>
      </RailButton>
    </RailGroup>
    <RailGroup $gap={0} $top="auto">
      <RailButton aria-label="Favourites"><Heart /></RailButton>
      <RailButton aria-label="History"><Icon><circle cx="16" cy="16" r="15" /><path d="M16 7v10l6 6" /></Icon></RailButton>
      <RailButton aria-label="More"><Icon><g fill="currentColor" stroke="none"><circle cx="5" cy="16" r="2.700" /><circle cx="16" cy="16" r="2.700" /><circle cx="27" cy="16" r="2.700" /></g></Icon></RailButton>
    </RailGroup>
  </Rail>
);

const BrowserTop = () => (
  <>
    <TitleBar>
      <Tab>
        <SapLogo w={32} id="sapTab" />
        <TabTitle>New Story - Stories - SAP</TabTitle>
        <button aria-label="Close tab"><Icon size={16} stroke={4}><path d="M3 3l26 26M29 3L3 29" /></Icon></button>
      </Tab>
      <NewTab aria-label="New tab"><Icon size={17} stroke={7}><path d="M16 0v32M0 16h32" /></Icon></NewTab>
      <WindowButtons>
        <WindowButton aria-label="Search tabs"><SearchGlyph size={30} stroke={2.2} /></WindowButton>
        <WindowButton aria-label="Minimise"><Icon size={24} stroke={4}><path d="M0 29h32" /></Icon></WindowButton>
        <WindowButton aria-label="Restore"><Icon size={25} stroke={3}><path d="M2 9h20v21H2zM9 9V2h21v21h-8" /></Icon></WindowButton>
        <WindowButton aria-label="Close"><Icon size={24} stroke={3}><path d="M1 1l30 30M31 1L1 31" /></Icon></WindowButton>
      </WindowButtons>
    </TitleBar>
    <AddressRow>
      <AddressBar>
        <ChromeButton $w={70} aria-label="Back"><Chevron dir="left" size={22} /></ChromeButton>
        <ChromeButton $w={78} $dim aria-label="Forward"><Chevron dir="right" size={22} /></ChromeButton>
        <ChromeButton $w={40} aria-label="Reload">
          <Icon size={26} stroke={2.6}><path d="M28 21A14 14 0 1 1 26 7" /><path d="M29 1v10H19z" fill="currentColor" stroke="none" /></Icon>
        </ChromeButton>
        <Vpn>VPN</Vpn>
        <ChromeButton $w={54} aria-label="Site information">
          <Icon size={28}><rect x="5" y="13" width="22" height="18" rx="3" fill="currentColor" stroke="none" /><path d="M10 14V8a6 6 0 0 1 12 0v6" strokeWidth="2.600" /></Icon>
        </ChromeButton>
        <Url>sactrial-sacap10-r35ytyw23momxoa9gpulqxy4.ap10.hcs.<b>cloud.sap</b>/sap/fpa/ui/tenants/1c86f/app.html#/story2&amp;/s2/F7B0EE008A8E</Url>
        <ChromeButton aria-label="Pin"><Icon size={28}><path d="M14 3H4v26h24V20" /><path d="M21 2l9 8-4 2-5 7-6-6 6-5zM18 16l-8 7" /></Icon></ChromeButton>
        <ChromeButton aria-label="Snapshot"><Icon size={30}><path d="M5 10h5l2-5h8l2 5h5q3 0 3 3v12q0 3-3 3H5q-3 0-3-3V13q0-3 3-3z" /><circle cx="16" cy="18" r="5" /></Icon></ChromeButton>
        <ChromeButton aria-label="Protection"><Icon size={30}><path d="M16 2q6 4 12 3v13q0 8-12 12Q4 26 4 18V5q6 1 12-3z" /><path d="M11 16l4 5 7-8" /></Icon></ChromeButton>
        <ChromeButton aria-label="Share"><Icon size={28}><path d="M4 4q-1-3 3-2l21 12q3 2 0 4L7 30q-4 1-3-2l5-12z" /></Icon></ChromeButton>
        <ChromeButton aria-label="Favourite"><Icon size={30}><path d="M16 30C8 22 2 17 2 10a7 7 0 0 1 14-3 7 7 0 0 1 14 3c0 7-6 12-14 20z" /></Icon></ChromeButton>
        <ChromeButton aria-label="Downloads"><Icon size={28}><path d="M16 3v19M9 15l7 8 7-8M3 23v7h26v-7" strokeWidth="2.400" /></Icon><DownloadDot /></ChromeButton>
        <ChromeButton aria-label="Easy setup"><Icon size={26} stroke={3}><path d="M2 6h28M2 16h28M2 26h28M21 2v8M11 12v8M21 22v8" /></Icon></ChromeButton>
        <ChromeButton aria-label="Profile">
          <Profile><Icon size={28} stroke={2.4}><circle cx="16" cy="9" r="7" /><path d="M11 15q-6 5-5 12 1 3 5 3h10q4 0 5-3 1-7-5-12" /></Icon></Profile>
        </ChromeButton>
      </AddressBar>
      <SideDock>
        <ChromeButton aria-label="Extensions"><Icon size={28}><path d="M16 1l13 7v16l-13 7-13-7V8zM3 8l13 7 13-7M16 15v16" strokeWidth="2.400" /></Icon></ChromeButton>
        <DockAccent />
      </SideDock>
    </AddressRow>
  </>
);

const SideNav = () => (
  <Nav aria-label="Main">
    <NavItem $h={89} aria-label="Menu"><Icon stroke={4}><path d="M0 6h32M0 16h32M0 26h32" /></Icon></NavItem>
    <NavItem aria-label="Home"><Icon><path d="M1 18L16 4l15 14M5 18v12h8v-9h6v9h8V18L16 9z" /></Icon></NavItem>
    <NavItem aria-label="Files"><Icon><path d="M1 30V4h10l3 4h17v22z" strokeWidth="2.400" /></Icon></NavItem>
    <NavItem $h={90} $active aria-label="Stories"><StoryGlyph /></NavItem>
    <NavItem aria-label="Applications"><Puzzle /></NavItem>
    <NavItem $h={90} $more aria-label="More"><Dots /></NavItem>
    <NavLower>
      <NavItem aria-label="Datasets">
        <Icon stroke={2.4}><circle cx="16" cy="3.500" r="3" /><circle cx="4" cy="28" r="3" /><circle cx="28" cy="28" r="3" /><path d="M9 13c0-4 14-4 14 0v12c0 4-14 4-14 0zM9 14c2 3 12 3 14 0M9 20c2 3 12 3 14 0M6 26l3-3M26 26l-3-3" /></Icon>
      </NavItem>
      <NavItem aria-label="Catalog"><Icon stroke={2.6}><path d="M1 3h30v25H18l-2 2-2-2H1zM16 3v25" /><path d="M6 3h6v13l-3-3-3 3z" fill="currentColor" stroke="none" /></Icon></NavItem>
      <NavItem $more aria-label="Security">
        <Icon size={34} stroke={2.6}><path d="M6 15h20v13q0 3-3 3H9q-3 0-3-3zM9 15V8a7 7 0 0 1 14 0v7" /><circle cx="16" cy="21" r="2.500" fill="currentColor" /><path d="M12 27h8l-4-6z" fill="currentColor" stroke="none" /></Icon>
      </NavItem>
      <NavItem $more aria-label="Packages">
        <Icon size={34}><path d="M16 6l-4-5L0 6l5 5zM16 6l4-5 12 5-5 5zM16 6l11 5-11 5-11-5zM5 11l-4 5 11 5 4-5zM27 11l4 5-11 5-4-5zM4 18v8l12 5 12-5v-8M16 17v14" strokeLinejoin="round" /></Icon>
      </NavItem>
      <NavItem aria-label="Currency">
        <Icon size={34} stroke={2.4}><path d="M13 10C6 15 4 20 5 26q1 5 6 5h9q6 0 7-5c1-6-2-11-8-16z" /><path d="M9 2l4 3 3-2 3 2 2-1-3 6h-5z" strokeWidth="1.800" /><path d="M20 4l9-1-1 5-8 1z" fill="currentColor" /><path d="M20 17q-7-3-7 1t7 4-7 4M16 13v15" strokeWidth="2.400" /></Icon>
      </NavItem>
      <NavItem aria-label="Connections"><Icon size={34} stroke={2.4}><path d="M1 2h12v19H1zM19 2h12v19H19zM4 7h6M22 7h6M6 13h2M24 13h2M7 21v8M25 21v8M0 29h32" /></Icon></NavItem>
      <NavItem $more aria-label="About"><InfoGlyph /></NavItem>
    </NavLower>
  </Nav>
);

const ShellHeader = () => (
  <Shell>
    <ShellButton $w={113} aria-label="Back"><svg width="28" height="28" viewBox="0 0 30 30" fill="none" stroke="currentColor" strokeWidth="4" aria-hidden="true"><path d="M23 1L10 15l13 14" /></svg></ShellButton>
    <SapLogo w={130} id="sapHeader" />
    <Crumb href="#stories"><StoryGlyph />Stories</Crumb>
    <CrumbRule />
    <StoryName>New Story *</StoryName>
    <ShellButton $w={102} aria-label="Favourite"><Icon><path d="M16 1l4 11h11l-9 7 4 12-10-7-10 7 4-12-9-7h11z" /></Icon></ShellButton>
    <ShellButton $w={78} aria-label="Close story"><Icon size={34}><circle cx="16" cy="16" r="15" /><path d="M10 10l12 12M22 10L10 22" strokeWidth="2.600" /></Icon></ShellButton>
    <Trial>Trial ends in 33 days</Trial>
    <Buy>Buy Now</Buy>
    <ShellButton aria-label="Search"><SearchGlyph size={30} stroke={2.4} /></ShellButton>
    <ShellButton aria-label="Just Ask">
      <Icon size={34}><path d="M21 3A10 10 0 0 0 2 11c0 6 6 8 6 14h8c0-2 0-3 1-5M8 27h8M9 30h6" strokeWidth="2.200" /><path d="M25 3l2 5 5 2-5 2-2 5-2-5-5-2 5-2zM22 16l1.500 3 3.500 1.500-3.500 1.500-1.500 3-1.500-3-3.500-1.500 3.500-1.500z" fill="currentColor" stroke="none" /></Icon>
    </ShellButton>
    <ShellButton aria-label="Insights"><Bulb /></ShellButton>
    <ShellButton aria-label="Notifications">
      <Icon><path d="M3 27c4-3 5-8 5-14a8 8 0 0 1 16 0c0 6 1 11 5 14z" strokeWidth="2.200" /><path d="M12 29h8v2h-8z" fill="currentColor" /></Icon>
      <Badge>13</Badge>
    </ShellButton>
    <ShellButton aria-label="Comments"><Icon><path d="M9 18H4q-3 0-3-3V4q0-3 3-3h14q3 0 3 3v6" strokeWidth="2.200" /><path d="M13 11h15q3 0 3 3v9q0 3-3 3h-1v5l-6-5h-8q-3 0-3-3v-9q0-3 3-3z" strokeWidth="2.200" /></Icon></ShellButton>
    <ShellButton aria-label="Feedback"><Icon><path d="M15 6H3q-2 0-2 2v14q0 2 2 2h4l2 7 6-7h12q2 0 2-2v-3" strokeWidth="2.200" /><circle cx="23" cy="11" r="8" /><path d="M19 12q4 5 8 0M20 8v2M26 8v2" /></Icon></ShellButton>
    <ShellButton aria-label="Help"><Icon><circle cx="16" cy="16" r="15" /><path d="M11 12q0-5 5-5t5 4-5 6v3" strokeWidth="2.600" /><circle cx="16" cy="24.500" r="2" fill="currentColor" stroke="none" /></Icon></ShellButton>
    <Avatar>SB</Avatar>
  </Shell>
);

const StoryToolbar = () => (
  <Toolbar>
    <Collapse aria-label="Collapse toolbar"><Chevron dir="up" stroke={3} /></Collapse>
    <Group>
      <h2>File</h2>
      <Tools>
        <Tool aria-label="Save"><Icon size={30}><path d="M2 2h26q2 0 2 2v26H7l-5-5zM9 2v11h14V2M11 30V20h11v10M13 7h6M15 25h3" /></Icon><Chevron size={20} /></Tool>
        <Tool $dim aria-label="Share"><Icon size={30}><circle cx="6" cy="16" r="5" /><circle cx="26" cy="6" r="5" /><circle cx="26" cy="26" r="5" /><path d="M10 13l11-5M10 19l11 5" /></Icon><Chevron size={20} /></Tool>
        <Tool aria-label="Tools"><Icon size={30}><path d="M2 6l6 6 5-3-1-5-3-3q9 0 9 9 0 3-2 4l13 12q0 4-4 4L12 16q-9 1-10-10z" strokeWidth="2.200" /></Icon><Chevron size={20} /></Tool>
      </Tools>
    </Group>
    <Separator />
    <Group>
      <h2>Edit</h2>
      <Tools>
        <Tool $strong aria-label="Undo"><Icon size={30} stroke={4}><path d="M11 1L3 9l8 8M3 9h15a9 9 0 0 1 0 20H2" /></Icon></Tool>
        <Tool $dim aria-label="Redo"><Icon size={30} stroke={3}><path d="M21 1l8 8-8 8M29 9H14a9 9 0 0 0 0 20h16" /></Icon></Tool>
        <Tool aria-label="Refresh"><Icon size={30}><path d="M25 5H15a13 13 0 1 0 14 15M20-1l6 6-6 6" strokeWidth="2.200" /></Icon><Chevron size={20} /></Tool>
        <Tool aria-label="Copy"><Icon size={30}><path d="M9 8h13v24H1V15zM9 8v7H1M12 8V5l5-5h14v26h-9M7 21h9M7 26h9" strokeWidth="2.200" /></Icon><Chevron size={20} /></Tool>
      </Tools>
    </Group>
    <Separator />
    <Group>
      <h2>Insert</h2>
      <Tools $gap={54}>
        <Tool aria-label="Chart"><ChartGlyph /></Tool>
        <Tool aria-label="Table"><TableGlyph size={31} /></Tool>
        <Tool aria-label="Input control"><SlidersGlyph /></Tool>
        <Tool $strong aria-label="Add"><Plus /><Chevron size={20} /></Tool>
      </Tools>
    </Group>
    <Separator $r={16} />
    <Group $tight>
      <h2>View</h2>
      <Tools $gap={17}>
        <Toggle $on aria-label="Left panel"><Icon size={34}><rect x="1" y="1" width="30" height="30" rx="3" /><path d="M2 2h12v28H2z" fill="currentColor" stroke="none" /></Icon></Toggle>
        <Toggle aria-label="Right panel"><Icon><rect x="1" y="1" width="30" height="30" rx="3" /><path d="M19 0h10q3 0 3 3v26q0 3-3 3H19z" fill={color.accent} stroke="none" /></Icon></Toggle>
        <Toggle aria-label="Details"><InfoGlyph /></Toggle>
        <Toggle aria-label="Filter"><Icon size={29}><path d="M2 2h28L19 17v9l-6 5V17z" strokeLinejoin="round" strokeWidth="2.400" /></Icon></Toggle>
        <Toggle $on aria-label="Extensions"><Puzzle /></Toggle>
        <Toggle aria-label="More view options"><Dots /></Toggle>
      </Tools>
    </Group>
    <Separator $l={18} />
    <Group>
      <h2>More</h2>
      <Tools><Tool aria-label="More"><Dots /></Tool></Tools>
    </Group>
    <Modes>
      <Device><Icon><path d="M1 4h30v22H1zM8 30h16" /><path d="M1 24h30" strokeWidth="4" /></Icon></Device>
      <Mode $w={77} $on>Edit</Mode>
      <Mode $w={91}>View</Mode>
      <Mode $w={63} aria-label="View options"><Chevron size={24} /></Mode>
    </Modes>
  </Toolbar>
);

const AssetsPanel = () => (
  <Panel>
    <PanelTabs>
      <PanelTab $on>Assets</PanelTab>
      <PanelTab>Outline</PanelTab>
      <PanelTab>Filters</PanelTab>
      <ClosePanel aria-label="Close panel"><Icon size={32} stroke={3}><path d="M7 7l18 18M25 7L7 25" /></Icon></ClosePanel>
    </PanelTabs>
    <SearchBox>
      <input type="text" placeholder="Search" aria-label="Search assets" />
      <SearchGlyph size={27} stroke={2.4} />
    </SearchBox>
    <TreeArea>
      <Tree>
        <TreeRow $h={45} $indent={16} $gap={15} $bold><Chevron size={26} stroke={3} />Widgets</TreeRow>
        {widgets.map(w => <TreeRow key={w.label} $h={79} $indent={72} $gap={0}><WidgetIcon>{w.icon}</WidgetIcon>{w.label}</TreeRow>)}
        {sections.map(s => <TreeRow key={s} $h={77} $indent={33} $gap={15}><Chevron dir="right" size={25} stroke={3} />{s}</TreeRow>)}
      </Tree>
      <ScrollColumn $w={26} $pad="0 0 8px">
        <Chevron dir="up" size={10} />
        <VThumb $h={494} $top={10} />
        <Chevron size={10} />
      </ScrollColumn>
    </TreeArea>
    <Grip />
  </Panel>
);

const StoryCanvas = () => (
  <CanvasArea>
    <CanvasRow>
      <Canvas>
        <Stats>
          <WidgetTitle>Salary</WidgetTitle>
          <BigNumber>21,465,433.00</BigNumber>
          <NumberCaption>Salary</NumberCaption>
          <WidgetTitle>Salary per Department</WidgetTitle>
          <Bars>
            {departments.map(d => (
              <BarRow key={d.name}>
                <BarLabel>{d.name}</BarLabel>
                <BarTrack><Bar style={{ width: d.width }} />{d.value}</BarTrack>
              </BarRow>
            ))}
          </Bars>
        </Stats>
        <Placeholders>
          <InputPlaceholder>
            <ListDrawing />
            <OutlineButton $w={364}><Plus size={28} />Create an Input Control</OutlineButton>
          </InputPlaceholder>
          <ChartPlaceholder>
            <GhostBars>
              {ghosts.map(g => <GhostBar key={g.tone} $c={g.tone} style={{ width: g.width }} />)}
            </GhostBars>
            <Hint>Use a bar chart to compare data points against each other.</Hint>
            <OutlineButton $w={302} aria-label="Add data"><Plus size={28} /></OutlineButton>
          </ChartPlaceholder>
        </Placeholders>
        <MoveCursor width="48" height="48" viewBox="0 0 48 48" aria-hidden="true">
          <path d="M24 1l10 11h-6v8h8v-6l11 10-11 10v-6h-8v8h6L24 47 14 36h6v-8h-8v6L1 24l11-10v6h8v-8h-6z" fill="#fff" stroke="#444" strokeWidth="1.500" />
        </MoveCursor>
      </Canvas>
      <ScrollColumn $w={18} $pad="10px 0 8px 8px">
        <Chevron dir="up" size={12} />
        <VThumb $h={316} $top={106} />
        <Chevron size={12} />
      </ScrollColumn>
    </CanvasRow>
    <HScroll><Chevron dir="left" size={10} stroke={3} /><HThumb /><Chevron dir="right" size={10} stroke={3} /></HScroll>
  </CanvasArea>
);

const Windows = () => (
  <TaskBar>
    <TaskButton $w={88} aria-label="Start"><Icon size={33}><path d="M0 5l14-2v12H0zM16 3l16-3v15H16zM0 17h14v12L0 27zM16 17h16v15l-16-3z" fill="currentColor" stroke="none" /></Icon></TaskButton>
    <TaskButton $w={100} aria-label="Search"><Icon size={44} stroke={2.8}><circle cx="19" cy="13" r="11.500" /><path d="M11 21L1 31" strokeWidth="3.500" /></Icon></TaskButton>
    <TaskButton $w={98} aria-label="Task view"><Icon><path d="M1 0v4h19V0M1 10h19v13H1zM1 32v-4h19v4M29 0v7M29 15v17" /><path d="M26 9h5v4h-5z" fill="currentColor" stroke="none" /></Icon></TaskButton>
    <TaskRule />
    {apps.map(a => (
      <TaskButton key={a.name} $open={a.open} $active={a.active} aria-label={a.name}>
        {a.art}
        {a.count && <Count>{a.count}</Count>}
      </TaskButton>
    ))}
    <Tray>
      <Battery>5:12</Battery>
      <TaskButton $w={64} aria-label="Hidden icons"><Chevron dir="up" size={25} /></TaskButton>
      <TaskButton $w={64} aria-label="Microphone"><Icon><rect x="9" y="0" width="14" height="24" rx="3" fill="currentColor" stroke="none" /><path d="M6 18v3q0 6 5 6h10q5 0 5-6v-3M16 27v4M10 31h12" /></Icon></TaskButton>
      <TaskButton $w={68} aria-label="Network"><Icon size={28}><path d="M2 31C2 15 12 3 28 3M9 31c0-12 8-20 20-20M16 31c0-7 5-12 13-12" stroke="#c6c6c6" /><circle cx="27" cy="28" r="3" fill="currentColor" stroke="none" /></Icon></TaskButton>
      <TaskButton $w={74} aria-label="Pen"><Icon size={30}><path d="M25 1q5 0 3 5L16 25l-5 4 1-7zM11 15q-9 0-8 8t8 5M20 19q8-1 9-6" /></Icon></TaskButton>
      <Lang>ENG</Lang>
      <Clock>07:17<br />28/06/2024</Clock>
      <TaskButton $w={90} aria-label="Notifications"><Icon size={33}><path d="M20 25h-3l-3 6v-6H1V1h30v16" /><path d="M28 17q5 8-2 12-4 2-8-1 10 0 10-11z" /></Icon></TaskButton>
    </Tray>
  </TaskBar>
);

export default function App() {
  return (
    <Screen>
      <Global />
      <Desktop>
        <OperaRail />
        <BrowserColumn>
          <BrowserTop />
          <AppWindow>
            <SideNav />
            <Work>
              <ShellHeader />
              <StoryToolbar />
              <PageTabs>
                <PageTab>Best Recruiting Source</PageTab>
                <AddPage $strong aria-label="Add page"><Plus /><Chevron size={20} /></AddPage>
              </PageTabs>
              <Body>
                <AssetsPanel />
                <StoryCanvas />
              </Body>
            </Work>
          </AppWindow>
        </BrowserColumn>
      </Desktop>
      <Windows />
    </Screen>
  );
}
